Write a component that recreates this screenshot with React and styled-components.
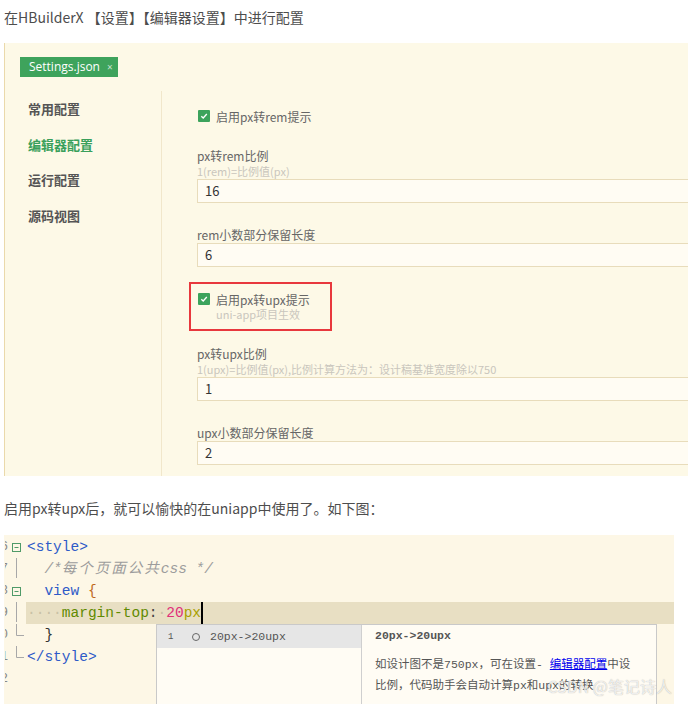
import React from "react";
import styled, { createGlobalStyle } from "styled-components";

const GlobalStyle = createGlobalStyle`
  html, body { margin: 0; padding: 0; background: #fff; }
  body { width: 688px; height: 704px; overflow: hidden; }
`;

/* ===================== PAGE ===================== */

const Page = styled.div`
  width: 688px;
  height: 704px;
  overflow: hidden;
  padding-left: 4px;
  box-sizing: border-box;
  font-family: "Noto Sans CJK SC", sans-serif;
  color: #4d4d4d;
`;

const Para = styled.p`
  margin: 0;
  padding-top: ${({ $top }) => $top}px;
  font-size: 14px;
  line-height: 22px;
  white-space: nowrap;
`;

/* ===================== SETTINGS ===================== */

const Settings = styled.div`
  margin-top: 15px;
  width: 720px;
  height: 433px;
  box-sizing: border-box;
  background: #fdf9e7;
  border-left: 1px solid #ead9ab;
  padding-top: 14px;
  display: flex;
  flex-direction: column;
`;

const Tab = styled.div`
  align-self: flex-start;
  margin-left: 15px;
  height: 20px;
  width: 98px;
  box-sizing: border-box;
  background: #3ea35c;
  color: #fff;
  font-family: "Open Sans", "Noto Sans CJK SC", sans-serif;
  font-size: 12px;
  line-height: 20px;
  padding-left: 9px;
  display: flex;
  align-items: center;
  gap: 7px;
  white-space: nowrap;

  span {
    font-size: 10px;
    opacity: 0.7;
  }
`;

const Body = styled.div`
  margin-top: 14px;
  flex: 1;
  display: flex;
`;

const Nav = styled.div`
  width: 157px;
  padding-left: 23px;
  box-sizing: border-box;
  border-right: 1px solid #f1e7cb;
`;

const NavItem = styled.div`
  height: 35.6px;
  line-height: 35.6px;
  font-size: 13px;
  font-weight: 600;
  color: ${({ $active }) => ($active ? "#3aa05b" : "#555")};
`;

const Content = styled.div`
  flex: 1;
  padding: 17px 0 0 35px;
  display: flex;
  flex-direction: column;
  gap: 24px;
`;

const CheckRow = styled.div`
  display: flex;
  align-items: center;
  gap: 6px;
  height: 16px;
  padding-left: 1px;
  font-size: 12px;
  color: #666;
`;

const Check = styled.span`
  width: 12px;
  height: 12px;
  border-radius: 1px;
  background: #3ca35c;
  display: flex;
  align-items: center;
  justify-content: center;
`;

const Highlight = styled.div`
  align-self: flex-start;
  width: 143px;
  box-sizing: border-box;
  margin: -9px 0 -9px -8px;
  padding: 7px 0 7px 6px;
  border: 2px solid #e8383d;
`;

const Hint = styled.div`
  font-size: 11px;
  line-height: 15px;
  color: #c9c6bd;
  white-space: nowrap;
  padding-left: ${({ $indent }) => ($indent ? "19px" : "0")};
`;

const Field = styled.div`
  display: flex;
  flex-direction: column;
`;

const Label = styled.div`
  font-size: 12px;
  line-height: 16px;
  color: #666;
`;

const Input = styled.div`
  height: 24px;
  box-sizing: border-box;
  border: 1px solid #e8dcbb;
  background: #fffcf3;
  padding-left: 7px;
  font-size: 13px;
  line-height: 22px;
  color: #333;
`;

/* ===================== CODE ===================== */

const CodeBox = styled.div`
  position: relative;
  margin-top: 16px;
  width: 670px;
  height: 170px;
  padding-top: 1px;
  box-sizing: border-box;
  background: #fdf7e6;
  overflow: hidden;
  font-family: "Liberation Mono", "Noto Sans CJK SC", monospace;
  font-size: 14.5px;
`;

const Row = styled.div`
  display: flex;
  height: 22px;
  line-height: 22px;
`;

const LineNo = styled.div`
  width: 3px;
  margin-left: 1px;
  overflow: hidden;
  display: flex;
  justify-content: flex-end;
  font-size: 13px;
  color: #888;
`;

const Fold = styled.div`
  width: 18px;
  height: 22px;
  flex-shrink: 0;
`;

const Code = styled.div`
  flex: 1;
  padding-left: 1px;
  white-space: pre;
  color: #333;
  background: ${({ $active }) => ($active ? "#e8dfc3" : "transparent")};
`;

const Tok = styled.span`
  color: ${({ $c }) => $c};
  font-style: ${({ $i }) => ($i ? "italic" : "normal")};
`;

const Wide = styled.span`
  letter-spacing: 2px;
`;

const Caret = styled.span`
  display: inline-block;
  width: 2px;
  height: 22px;
  vertical-align: top;
  background: #000;
`;

const Popup = styled.div`
  position: absolute;
  left: 152px;
  top: 89px;
  width: 501px;
  height: 100px;
  box-sizing: border-box;
  border: 1px solid #c9c9c9;
  background: #fffcf4;
  display: flex;
  font-size: 11.5px;
  color: #555;
`;

const List = styled.div`
  width: 204px;
  border-right: 1px solid #cfcfcf;
`;

const Item = styled.div`
  height: 23px;
  background: #e6e6e6;
  display: flex;
  align-items: center;
  padding-left: 11px;
`;

const ItemNo = styled.span`
  font-size: 9px;
  width: 24px;
`;

const Ring = styled.span`
  width: 6px;
  height: 6px;
  border: 1px solid #666;
  border-radius: 50%;
  margin-right: 10px;
`;

const Detail = styled.div`
  flex: 1;
  padding: 1px 0 0 13px;
`;

const DetailTitle = styled.div`
  line-height: 20px;
  font-weight: 600;
`;

const DetailText = styled.div`
  margin-top: 8px;
  line-height: 21px;
  white-space: nowrap;

  a {
    color: #0000ee;
    text-decoration: underline;
  }
`;

const Watermark = styled.div`
  position: absolute;
  right: 2px;
  top: 141px;
  font-family: "Noto Sans CJK SC", sans-serif;
  font-size: 16px;
  line-height: 20px;
  color: rgba(255, 255, 255, 0.8);
  text-shadow: 0 0 1px rgba(0, 0, 0, 0.35);
`;

/* ===================== PIECES ===================== */

function FoldMark({ kind }) {
  const c = "#a8a8a8";
  return (
    <Fold>
      <svg width="18" height="22" viewBox="0 0 18 22">
        {kind === "open" && (
          <g stroke="#4f9a68" fill="none" strokeWidth="1">
            <rect x="4.5" y="7.5" width="8" height="8" />
            <line x1="6.5" y1="11.5" x2="10.5" y2="11.5" />
          </g>
        )}
        {kind === "line" && (
          <line x1="8.5" y1="0" x2="8.5" y2="20" stroke={c} />
        )}
        {kind === "end" && (
          <path d="M8.5 0 V11.5 H16" stroke={c} fill="none" />
        )}
      </svg>
    </Fold>
  );
}

function CheckBox() {
  return (
    <Check>
      <svg width="8" height="8" viewBox="0 0 8 8">
        <path d="M1.3 4.2 L3.2 6 L6.8 2" stroke="#fff" strokeWidth="1.3" fill="none" />
      </svg>
    </Check>
  );
}

const navItems = ["常用配置", "编辑器配置", "运行配置", "源码视图"];

export default function App() {
  return (
    <Page>
      <GlobalStyle />
      <Para $top={6}>在HBuilderX 【设置】【编辑器设置】中进行配置</Para>

      <Settings>
        <Tab>
          Settings.json <span>×</span>
        </Tab>
        <Body>
          <Nav>
            {navItems.map((n, i) => (
              <NavItem key={n} $active={i === 1}>
                {n}
              </NavItem>
            ))}
          </Nav>
          <Content>
            <CheckRow>
              <CheckBox />
              启用px转rem提示
            </CheckRow>

            <Field>
              <Label>px转rem比例</Label>
              <Hint>1(rem)=比例值(px)</Hint>
              <Input>16</Input>
            </Field>

            <Field>
              <Label>rem小数部分保留长度</Label>
              <Input>6</Input>
            </Field>

            <Highlight>
              <CheckRow>
                <CheckBox />
                启用px转upx提示
              </CheckRow>
              <Hint $indent>uni-app项目生效</Hint>
            </Highlight>

            <Field>
              <Label>px转upx比例</Label>
              <Hint>1(upx)=比例值(px),比例计算方法为：设计稿基准宽度除以750</Hint>
              <Input>1</Input>
            </Field>

            <Field>
              <Label>upx小数部分保留长度</Label>
              <Input>2</Input>
            </Field>
          </Content>
        </Body>
      </Settings>

      <Para $top={21}>启用px转upx后，就可以愉快的在uniapp中使用了。如下图：</Para>

      <CodeBox>
        <Row>
          <LineNo>6</LineNo>
          <FoldMark kind="open" />
          <Code>
            <Tok $c="#2f5bc8">&lt;style&gt;</Tok>
          </Code>
        </Row>
        <Row>
          <LineNo>7</LineNo>
          <FoldMark kind="line" />
          <Code>
            {"  "}
            <Tok $c="#9c9c9c" $i>
              /*<Wide>每个页面公共</Wide>css */
            </Tok>
          </Code>
        </Row>
        <Row>
          <LineNo>8</LineNo>
          <FoldMark kind="open" />
          <Code>
            {"  "}
            <Tok $c="#2f5bc8">view</Tok> <Tok $c="#c06a1c">{"{"}</Tok>
          </Code>
        </Row>
        <Row>
          <LineNo>9</LineNo>
          <FoldMark kind="line" />
          <Code $active>
            <Tok $c="#c9c1a6">····</Tok>
            <Tok $c="#5f8a00">margin-top</Tok>
            <Tok $c="#444">:</Tok>
            <Tok $c="#c9c1a6">·</Tok>
            <Tok $c="#e0307a">20</Tok>
            <Tok $c="#a9a000">px</Tok>
            <Caret />
          </Code>
        </Row>
        <Row>
          <LineNo>10</LineNo>
          <FoldMark kind="end" />
          <Code>
            {"  "}
            <Tok $c="#333">{"}"}</Tok>
          </Code>
        </Row>
        <Row>
          <LineNo>11</LineNo>
          <FoldMark kind="end" />
          <Code>
            <Tok $c="#2f5bc8">&lt;/style&gt;</Tok>
          </Code>
        </Row>
        <Row>
          <LineNo>12</LineNo>
          <FoldMark />
          <Code />
        </Row>

        <Popup>
          <List>
            <Item>
              <ItemNo>1</ItemNo>
              <Ring />
              20px-&gt;20upx
            </Item>
          </List>
          <Detail>
            <DetailTitle>20px-&gt;20upx</DetailTitle>
            <DetailText>
              如设计图不是750px，可在设置- <a>编辑器配置</a>中设
              <br />
              比例，代码助手会自动计算px和upx的转换
            </DetailText>
          </Detail>
        </Popup>

        <Watermark>CSDN @笔记诗人</Watermark>
      </CodeBox>
    </Page>
  );
}
